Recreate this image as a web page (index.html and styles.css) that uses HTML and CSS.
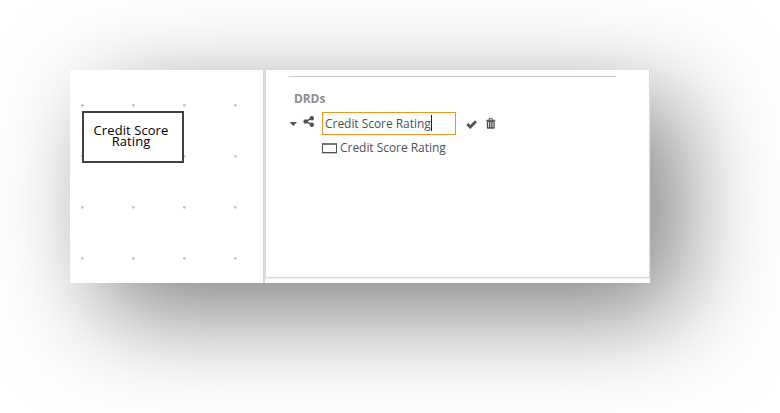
FILE: index.html
```
<!DOCTYPE html>
<html lang="en">
<head>
<meta charset="utf-8">
<title>Decision Navigator</title>
<link rel="stylesheet" href="styles.css">
</head>
<body>
<main class="window">
  <section class="canvas">
    <div class="node">Credit Score<br>Rating</div>
  </section>
  <section class="side">
    <div class="panel">
      <hr class="rule">
      <h2 class="title">DRDs</h2>
      <div class="row">
        <svg class="caret" width="8" height="4" viewBox="0 0 8 4"><path d="M.6 0h7.4L4.3 4z"/></svg>
        <svg class="share" width="11" height="11" viewBox="0 0 11 11"><path d="M8.8 2.2L2.6 5.5l6.2 3.2" fill="none" stroke="currentColor" stroke-width="1.5"/><circle cx="8.8" cy="2.3" r="2.2"/><circle cx="2.6" cy="5.5" r="2.2"/><circle cx="8.8" cy="8.7" r="2.2"/></svg>
        <div class="field"><span class="value">Credit Score Rating</span></div>
        <svg class="check" width="12" height="9" viewBox="0 0 12 9"><path d="M1.3 4l3 3L10 1.3" fill="none" stroke="currentColor" stroke-width="2.7"/></svg>
        <svg class="trash" width="10" height="11" viewBox="0 0 10 11"><path d="M3 2V.7h3.4V2" fill="none" stroke="currentColor" stroke-width=".9"/><path d="M0 1.8h9.4v1H0z"/><path fill-rule="evenodd" d="M.8 2.8h7.9v7q0 1-1 1H1.8q-1 0-1-1zM2.2 4v5.3H3V4zm2.2 0v5.3h.8V4zm2.2 0v5.3h.8V4z"/></svg>
      </div>
      <div class="child"><span class="shape"></span>Credit Score Rating</div>
    </div>
  </section>
</main>
</body>
</html>
```
FILE: styles.css
```
* { box-sizing: border-box; }
body {
  margin: 0;
  height: 413px;
  padding: 70px;
  background: #fff;
  font: 12px/18px "Open Sans", sans-serif;
  color: #4d5258;
  overflow: hidden;
}
.window {
  display: flex;
  width: 580px;
  height: 213px;
  background: #fff;
  box-shadow: 30px 30px 100px rgba(0, 0, 0, .5);
}
.canvas {
  width: 193px;
  padding: 41px 0 0 12px;
  background: radial-gradient(circle at 12.3px 35.3px, #c4c4c4 .9px, transparent 1.8px) 0 0 / 51px 51px;
}
.node {
  width: 102px;
  height: 52px;
  padding: 12px 4px 0 0;
  border: 2px solid #3f3f3f;
  background: #fff;
  color: #000;
  font-size: 13px;
  letter-spacing: .08px;
  line-height: 11px;
  text-align: center;
}
.side {
  width: 387px;
  border-left: 2px solid #dadada;
}
.panel {
  height: 208px;
  padding: 6px 33px 0 23px;
  border: solid #dadada;
  border-width: 0 1px 1px;
  box-shadow: 0 1px 1px #eee;
}
.rule {
  height: 1px;
  margin: 0;
  border: 0;
  background: #ccc;
}
.title {
  margin: 13px 0 4px 5px;
  color: #8b8d8f;
  font-size: 12px;
  font-weight: 700;
  letter-spacing: -.1px;
  line-height: 18px;
}
.row {
  display: flex;
  height: 23px;
}
svg { fill: currentColor; flex: none; }
.caret { margin: 10px 6px 0 0; }
.share { margin: 4px 8px 0 0; }
.field {
  width: 134px;
  height: 23px;
  padding: 2px;
  border: 1px solid #ec971f;
  white-space: nowrap;
}
.value {
  display: block;
  width: fit-content;
  height: 16px;
  line-height: 17px;
  letter-spacing: -.04px;
  border-right: 1px solid #222;
}
.check { margin: 8px 8px 0 10px; }
.trash { margin-top: 6px; }
.child {
  display: flex;
  align-items: center;
  height: 18px;
  margin: 4px 0 0 33px;
  letter-spacing: -.04px;
}
.shape {
  width: 15px;
  height: 10px;
  margin: 0 3px 0 0;
  border: 1px solid #4d5258;
  border-top: 2px solid #757a80;
  box-shadow: 0 1px #c4c6c8;
}
```
